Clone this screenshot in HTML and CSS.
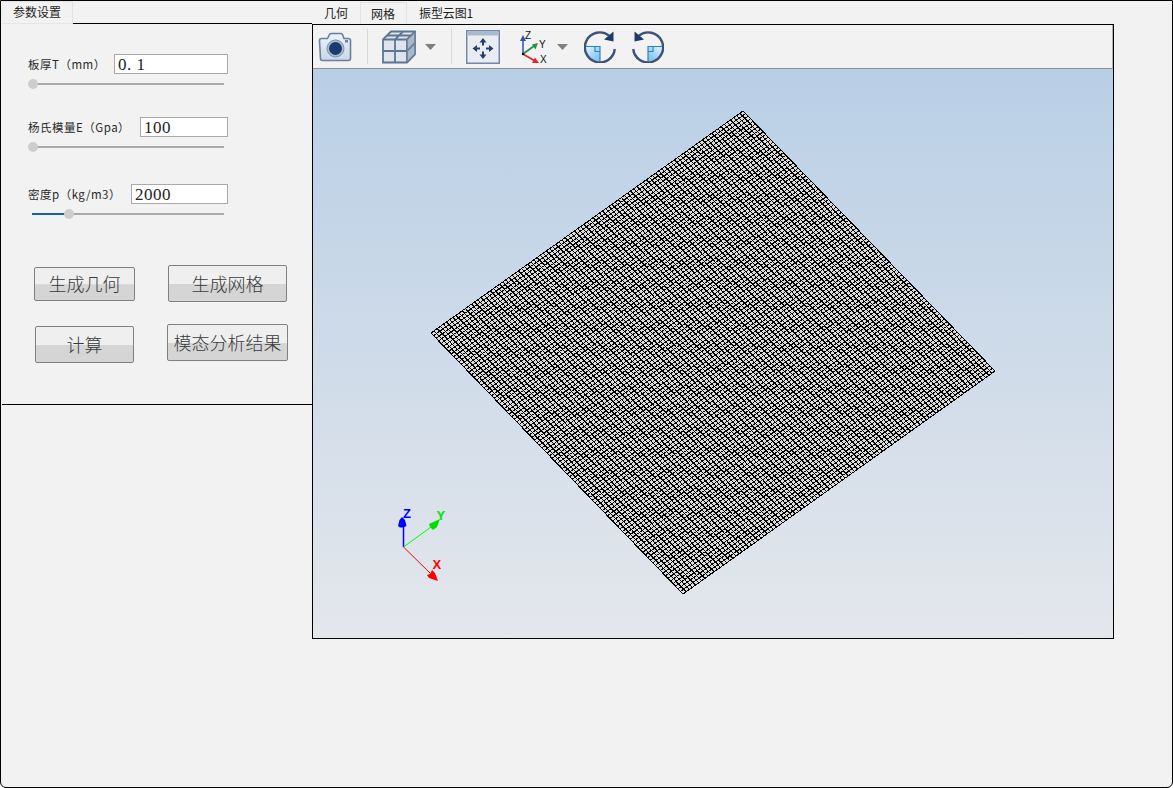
FILE: index.html
```html
<!DOCTYPE html>
<html lang="zh">
<head>
<meta charset="utf-8">
<title>参数设置</title>
<link rel="stylesheet" href="styles.css">
</head>
<body>
<div class="app">
  <aside class="left">
    <div class="tabrow">
      <div class="tab tab-param">参数设置</div>
      <div class="tabline"></div>
    </div>
    <section class="panel">
      <div class="field">
        <label class="lbl">板厚T（mm）</label>
        <div class="inp inp-a">0. 1</div>
      </div>
      <div class="slider"><div class="track"></div><div class="thumb" style="left:0px"></div></div>

      <div class="field field-b">
        <label class="lbl">杨氏模量E（Gpa）</label>
        <div class="inp inp-b">100</div>
      </div>
      <div class="slider"><div class="track"></div><div class="thumb" style="left:0px"></div></div>

      <div class="field field-c">
        <label class="lbl">密度p（kg/m3）</label>
        <div class="inp inp-c">2000</div>
      </div>
      <div class="slider"><div class="track"><div class="fill" style="width:32px"></div></div><div class="thumb" style="left:36px"></div></div>

      <div class="btnrow btnrow-1">
        <button class="btn btn-geo">生成几何</button>
        <button class="btn btn-mesh">生成网格</button>
      </div>
      <div class="btnrow btnrow-2">
        <button class="btn btn-calc">计算</button>
        <button class="btn btn-modal">模态分析结果</button>
      </div>
    </section>
  </aside>

  <main class="right">
    <nav class="tabs">
      <div class="vtab vtab-geo">几何</div>
      <div class="vtab vtab-active">网格</div>
      <div class="vtab vtab-mode">振型云图1</div>
    </nav>
    <div class="viewer">
      <div class="toolbar">
        <svg class="ic ic-cam" width="34" height="30" viewBox="0 0 34 30">
          <defs><linearGradient id="g1" x1="0" y1="0" x2="0" y2="1"><stop offset="0" stop-color="#eef3f9"/><stop offset="1" stop-color="#c9d7e8"/></linearGradient></defs>
          <path d="M1.500 8.500q0-2 2-2h6l2-4q.5-1 2-1h9q1.500 0 2 1l1.500 4h4q2.500 0 2.500 2v18q0 2-2 2h-26q-2 0-2-2z" fill="url(#g1)" stroke="#67809f" stroke-width="1.600"/>
          <circle cx="17.500" cy="16.500" r="8.500" fill="#a9bdd4" stroke="#7a90ac"/>
          <circle cx="17.500" cy="16.500" r="6.500" fill="#1d3a6e"/>
          <rect x="27" y="8" width="3" height="2.500" fill="#6b84a6"/>
        </svg>
        <span class="sep sep-a"></span>
        <svg class="ic ic-cube" width="34" height="34" viewBox="0 0 34 34">
          <path d="M1 9.500 9 1.500h24v23l-8 8h-24z" fill="#dfe4ec" stroke="#5d7591" stroke-width="1.800"/>
          <path d="M1 9.500h24v23M25 9.500 33 1.500M13 9.500v23M1 21h24M25 21l8-8M13 9.500l8-8M5 5.500h24" fill="none" stroke="#5d7591" stroke-width="1.800"/>
          <path d="M25 9.500 33 1.500v23l-8 8z" fill="#7d92aa" fill-opacity=".55"/>
        </svg>
        <svg class="ic ic-caret" width="11" height="6" viewBox="0 0 11 6"><path d="M0 0h11l-5.500 6z" fill="#808080"/></svg>
        <span class="sep sep-b"></span>
        <svg class="ic ic-fit" width="34" height="34" viewBox="0 0 34 34">
          <rect x=".75" y=".75" width="32.500" height="32.500" fill="#e9ecf0" stroke="#7389a6" stroke-width="1.500"/>
          <rect x="1.500" y="1.500" width="31" height="4" fill="#a9bad0"/>
          <path d="M16 11.500h2v4h-2zM16 21.500h2v4h-2zM10 17.500h4v2h-4zM20 17.500h4v2h-4z" fill="#22406e"/>
          <path d="M17 8l3.500 4.500h-7zM17 29l-3.500-4.500h7zM6.500 18.500l4.500-3.500v7zM27.500 18.500l-4.500-3.500v7z" fill="#22406e"/>
        </svg>
        <svg class="ic ic-axes" width="32" height="34" viewBox="0 0 32 34">
          <path d="M5 24V8" stroke="#2a56a8" stroke-width="1.500"/><path d="M5 5l3 6H2z" fill="#2a56a8"/>
          <path d="M5 24 16 16" stroke="#239048" stroke-width="1.800"/><path d="M20 13l-2.500 6.500-3.500-5z" fill="#239048"/>
          <path d="M5 24 17 31" stroke="#e0262c" stroke-width="1.800"/><path d="M21 33l-7 0 3-5.500z" fill="#e0262c"/>
          <circle cx="5" cy="24" r="1.200" fill="#111"/>
          <text class="axt" x="7" y="9">Z</text><text class="axt" x="21" y="18">Y</text><text class="axt" x="22" y="33">X</text>
        </svg>
        <svg class="ic ic-caret ic-caret2" width="11" height="6" viewBox="0 0 11 6"><path d="M0 0h11l-5.500 6z" fill="#808080"/></svg>
        <svg class="ic ic-rot" width="32" height="32" viewBox="0 0 32 32">
          <defs><linearGradient id="g2" x1="0" y1="0" x2="1" y2="1"><stop offset="0" stop-color="#e6f3fb"/><stop offset="1" stop-color="#6fbdea"/></linearGradient></defs>
          <path d="M1.500 15.500H16V30.500A15 15 0 0 1 1.500 15.500z" fill="url(#g2)"/>
          <path d="M1.500 15.500H16V30.500M11 15.500V20.500H16" fill="none" stroke="#2d83c4" stroke-width="1.200"/>
          <path d="M25 4.500A15 15 0 1 0 30.800 18" fill="none" stroke="#3b5379" stroke-width="2.400"/>
          <path d="M29.500 .5 29.500 10.500 20 8.500z" fill="#1f3a6e"/>
        </svg>
        <svg class="ic ic-rot ic-rot2" width="32" height="32" viewBox="0 0 32 32">
          <path d="M1.500 15.500H16V30.500A15 15 0 0 1 1.500 15.500z" fill="url(#g2)"/>
          <path d="M1.500 15.500H16V30.500M11 15.500V20.500H16" fill="none" stroke="#2d83c4" stroke-width="1.200"/>
          <path d="M25 4.500A15 15 0 1 0 30.800 18" fill="none" stroke="#3b5379" stroke-width="2.400"/>
          <path d="M29.500 .5 29.500 10.500 20 8.500z" fill="#1f3a6e"/>
        </svg>
      </div>
      <div class="canvas">
        <svg id="mesh" class="mesh" width="799" height="569" viewBox="313 69 799 569">
          <polygon id="meshfill" class="meshfill" points="743,111 995,371 683,594 431,333"/>
          <path id="meshlines" class="meshlines" d=""/>
        </svg>
        <svg class="triad" width="64" height="84" viewBox="385 502 64 84">
          <path d="M403.500 547V526" stroke="#0000ff" stroke-width="1.500"/>
          <path d="M402 517l3 3 1.500 6-3 1.500h-3.500l-2-1.500 1.500-6z" fill="#0000ff"/>
          <path d="M403.500 547 431 527" stroke="#00ff00" stroke-width="1"/>
          <path d="M440 519l-3 8-4 3-3-3-1-3z" fill="#00e000"/>
          <path d="M403.500 547 430 573" stroke="#ff0000" stroke-width="1"/>
          <path d="M438 581l-9-3-2-3 3-1 2-4 3 3z" fill="#ff0000"/>
          <text class="tz" x="403" y="518">Z</text>
          <text class="ty" x="436.500" y="520">Y</text>
          <text class="tx" x="432.500" y="569">X</text>
        </svg>
      </div>
    </div>
  </main>
</div>
<script src="mesh.js"></script>
</body>
</html>
```
FILE: styles.css
```css
* { box-sizing: border-box; }
html, body { margin: 0; padding: 0; background: #fff; }
body { font-family: "Noto Sans CJK SC", "Noto Sans", sans-serif; color: #222; }
.app {
  width: 1173px; height: 788px; display: flex; overflow: hidden;
  background: #f2f2f2; border: 1px solid #000; border-radius: 0 0 6px 6px;
}
.left { width: 311px; flex: none; }
.right { flex: 1; }
.tabrow { display: flex; height: 23px; }
.tab { width: 71px; margin-left: 1px; border: 1px solid #e2e2e2; border-left-color: #ececec; border-bottom: 1px solid #e6e6e6; font-size: 12px; line-height: 20px; padding-left: 10px; background: #f2f2f2; }
.tabline { flex: 1; border-bottom: 1px solid #000; }
.panel { margin-left: 1px; height: 381px; padding: 30px 0 0 26px; border-bottom: 1px solid #000; }
.field { display: flex; justify-content: space-between; align-items: center; width: 200px; height: 20px; }
.field-b { margin-top: 28px; }
.field-c { margin-top: 32px; }
.lbl { font-size: 11.500px; letter-spacing: .5px; color: #2a2a2a; }
.inp { height: 20px; background: #fff; border: 1px solid #aaa; font-family: "Liberation Serif", serif; font-size: 17px; letter-spacing: .5px; line-height: 19px; padding-left: 3px; color: #222; }
.inp-a { width: 114px; }
.inp-b { width: 88px; }
.inp-c { width: 97px; }
.slider { position: relative; width: 196px; height: 10px; margin-top: 5px; }
.track { position: absolute; left: 4px; right: 0; top: 4px; height: 2px; background: #aaa; }
.fill { height: 2px; background: #0f62ad; }
.thumb { position: absolute; top: 0; width: 10px; height: 10px; border-radius: 50%; background: #cdcdcd; }
.btnrow { display: flex; align-items: flex-start; }
.btnrow-1 { margin-top: 46px; }
.btnrow-2 { margin-top: 22px; }
.btn {
  display: block; height: 37px; padding: 0 0 2px; font-family: "Noto Sans CJK SC", sans-serif; font-size: 18px; font-weight: 300; color: #3a3a3a;
  border: 1px solid #808080; border-radius: 2px; background: linear-gradient(#efefef 0, #efefef 50%, #d5d5d5 52%, #d5d5d5 100%);
}
.btn-geo { width: 101px; height: 34px; margin: 2px 0 0 6px; }
.btn-mesh { width: 119px; margin-left: 33px; }
.btn-calc { width: 99px; margin: 2px 0 0 7px; }
.btn-modal { width: 121px; margin-left: 33px; }
.tabs { display: flex; height: 23px; font-size: 12px; }
.vtab { line-height: 24px; }
.vtab-geo { width: 48px; padding-left: 12px; }
.vtab-active { width: 47px; padding-left: 10px; border: 1px solid #e2e2e2; border-bottom-color: #f2f2f2; line-height: 22px; margin-top: 1px; }
.vtab-mode { padding-left: 12px; letter-spacing: -.1px; }
.viewer { width: 802px; height: 615px; border: 1px solid #000; display: flex; flex-direction: column; }
.toolbar { height: 44px; flex: none; display: flex; align-items: center; border-bottom: 1px solid #8f8f8f; border-right: 1px solid #b0b0b0; background: #f2f2f2; padding-left: 5px; }
.ic { display: block; flex: none; }
.sep { width: 1px; height: 35px; background: #d8d8d8; flex: none; }
.sep-a { margin-left: 15px; }
.ic-cube { margin-left: 14px; }
.ic-caret { margin-left: 9px; }
.sep-b { margin-left: 15px; }
.ic-fit { margin-left: 14px; }
.ic-axes { margin-left: 18px; }
.ic-caret2 { margin-left: 7px; }
.ic-rot { margin-left: 16px; }
.ic-rot2 { transform: scaleX(-1); }
.axt { font: 10px "Liberation Sans", sans-serif; fill: #111; }
.canvas { position: relative; flex: 1; background: linear-gradient(#b9cfe6, #e4e7ec); }
.mesh { position: absolute; left: 0; top: 0; }
.meshfill { fill: #dcdcdc; }
.meshlines { fill: none; stroke: #000; stroke-width: 1; shape-rendering: crispEdges; }
.triad { position: absolute; left: 72px; top: 433px; }
.tz, .ty, .tx { font: bold 13px "Liberation Sans", sans-serif; }
.tz { fill: #0000ff; }
.ty { fill: #00e600; }
.tx { fill: #ff0000; }
```
FILE: mesh.js
```js
(function () {
  var A = [743, 111], B = [995, 371], D = [431, 333], C = [683, 594];
  var N = 100, d = "";
  function lerp(p, q, t) { return [p[0] + (q[0] - p[0]) * t, p[1] + (q[1] - p[1]) * t]; }
  function seg(p, q) { d += "M" + p[0].toFixed(2) + " " + p[1].toFixed(2) + "L" + q[0].toFixed(2) + " " + q[1].toFixed(2); }
  for (var i = 0; i <= N; i++) {
    var t = i / N;
    seg(lerp(A, B, t), lerp(D, C, t));
    seg(lerp(A, D, t), lerp(B, C, t));
  }
  document.getElementById("meshlines").setAttribute("d", d);
})();
```
